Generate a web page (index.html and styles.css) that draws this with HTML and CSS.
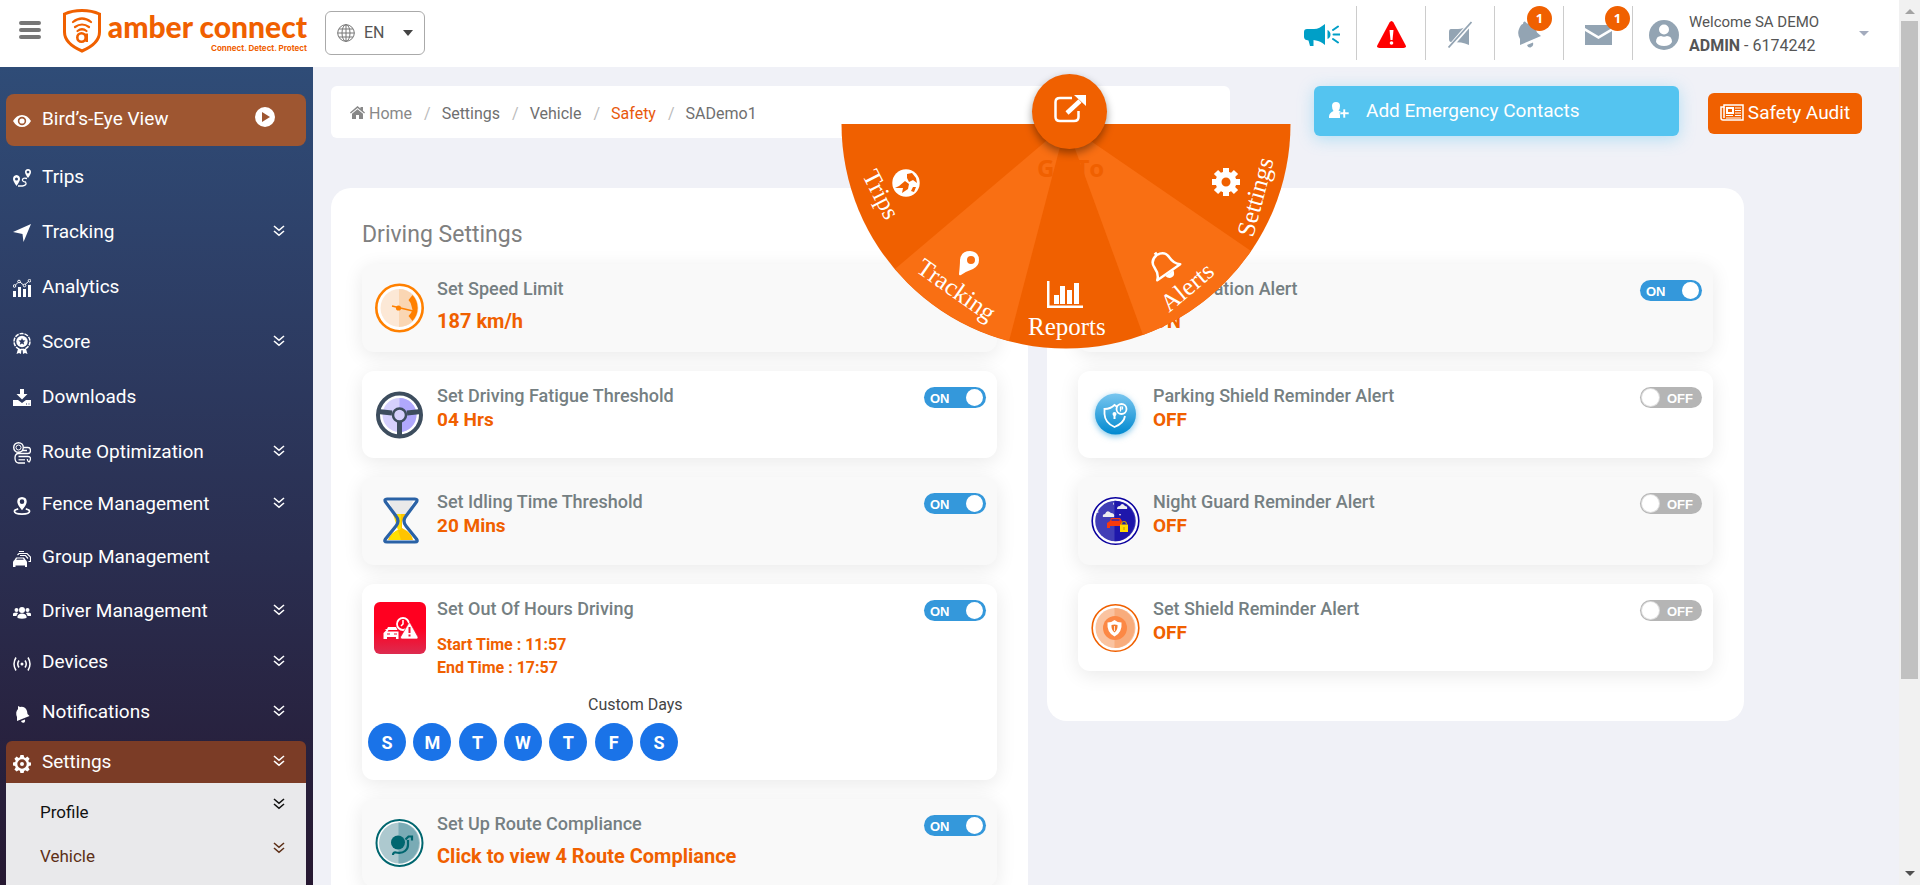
FILE: index.html
```html
<!DOCTYPE html>
<html lang="en">
<head>
<meta charset="utf-8">
<title>Amber Connect - Safety Settings</title>
<link rel="stylesheet" href="styles.css">
</head>
<body>
<svg class="defs" aria-hidden="true">
  <symbol id="chev" viewBox="0 0 12 12"><path d="M1 1l5 4.300 5-4.300M1 6l5 4.300L11 6" fill="none" stroke="currentColor" stroke-width="1.600"/></symbol>
  <symbol id="gear" viewBox="0 0 18 18"><path fill="currentColor" fill-rule="evenodd" d="M7.400 0h3.200l.5 2.300 1.300.6 2-1.300 2.200 2.200-1.300 2 .6 1.400 2.100.4v3l-2.200.5-.5 1.300 1.300 2-2.200 2.200-2-1.300-1.300.6-.5 2.100H7.400l-.5-2.200-1.300-.5-2 1.300-2.200-2.200 1.300-2-.6-1.300L0 10.600v-3l2.200-.5.5-1.300-1.300-2 2.200-2.200 2 1.300 1.300-.6zM9 4.300a4.700 4.700 0 100 9.400 4.700 4.700 0 000-9.400zM9 7a2 2 0 110 4 2 2 0 010-4z"/></symbol>
</svg>
<div class="app">
  <div class="page">
    <header class="topbar">
      <button class="menu-btn" aria-label="Menu"><svg viewBox="0 0 22 18" width="22" height="18"><path d="M2 2h18M2 9h18M2 16h18" stroke="#777" stroke-width="4" stroke-linecap="round"/></svg></button>
      <a class="logo" href="#">
        <svg viewBox="0 0 38 44" width="38" height="44" fill="none" stroke="#f06000">
          <path d="M19 1.500Q9 1.500 1.500 5v18c0 9 7 14.500 17.500 19 10.500-4.500 17.500-10 17.500-19V5Q29 1.500 19 1.500z" stroke-width="3"/>
          <path d="M10 13q9-7 18 0M12 18q7-5 14 0M14.500 22q4.500-3.500 9 0" stroke-width="2.200" stroke-linecap="round"/>
          <circle cx="18.500" cy="28.500" r="4.200" stroke-width="2.600"/><path d="M23.700 24.500v8.500" stroke-width="2.600"/>
        </svg>
        <span class="wordmark"><span class="brand">amber connect</span><span class="tagline">Connect. Detect. Protect</span></span>
      </a>
      <button class="lang" aria-label="Language">
        <svg viewBox="0 0 18 18" width="18" height="18" fill="none" stroke="#777"><circle cx="9" cy="9" r="8.300"/><ellipse cx="9" cy="9" rx="4" ry="8.300"/><path d="M9 .7v16.600M.7 9h16.600M2 5h14M2 13h14"/></svg>
        <span>EN</span>
        <svg viewBox="0 0 10 6" width="10" height="6"><path d="M0 0h10L5 6z" fill="#444"/></svg>
      </button>
      <div class="tools">
        <button class="tool" aria-label="Announcements"><svg viewBox="0 0 36 22" width="36" height="22"><path fill="#009fc7" d="M3 5h7c4 0 7-2 11-5v21c-4-3-6-4-9-4.500L9.500 16v6H6l-1.500-5.500Q0 16 0 13V8q0-3 3-3zM23.500 6q3 1.500 3 4.500t-3 4.500z"/><path d="M29 6l5-3.500M29.500 10.500h6M29 15l5 3.500" stroke="#009fc7" stroke-width="2" stroke-linecap="round"/></svg></button>
        <button class="tool" aria-label="Emergency"><svg viewBox="0 0 29 27" width="29" height="27"><path fill="red" d="M12.500 1.500q2-3 4 0L28.500 24q1.500 3-2 3h-24Q-1 27 .5 24z"/><path d="M12.500 9h4l-1 10h-2z" fill="#fff"/><circle cx="14.500" cy="22" r="1.800" fill="#fff"/></svg></button>
        <button class="tool" aria-label="Mute"><svg viewBox="0 0 24 27" width="24" height="27"><path fill="#93a4b3" d="M3 8h7q5 0 11-4v20q-4-2-8-2.500L3 21q-2 0-2-3v-7q0-3 2-3z"/><path d="M24.500 0L1 27" stroke="#fff" stroke-width="4.500"/><path d="M23.500 1L.5 26.500" stroke="#93a4b3" stroke-width="1.800"/></svg></button>
        <button class="tool" aria-label="Alerts"><svg viewBox="0 0 24 27" width="24" height="27" fill="#93a4b3"><path d="M2 8Q4 3 6 3q0-3 2-2.500l2 2q5-.5 8 4l2 5 4 3.500-21 9V18Q0 13 2 8zM10 24l6-2.500q1 4-2.500 5Q11 27 10 24z"/></svg><span class="badge">1</span></button>
        <button class="tool" aria-label="Messages"><svg viewBox="0 0 27 20" width="27" height="20" fill="#93a4b3"><path d="M0 0h27v3L13.500 11 0 3z"/><path d="M0 6l13.500 8L27 6v14H0z"/></svg><span class="badge">1</span></button>
      </div>
      <button class="account">
        <svg viewBox="0 0 30 30" width="30" height="30"><circle cx="15" cy="15" r="15" fill="#93a4b3"/><circle cx="15" cy="9.500" r="5" fill="#fff"/><path d="M7 22q0-6 5-6 3 1.500 6 0 5 0 5 6-2 4-8 4t-8-4z" fill="#fff"/></svg>
        <span class="who"><span class="hello">Welcome SA DEMO</span><br><b>ADMIN</b> - 6174242</span>
        <svg viewBox="0 0 10 5" width="10" height="5"><path d="M0 0h10L5 5z" fill="#a3abbd"/></svg>
      </button>
    </header>
    <div class="body">
      <nav class="sidebar">
        <a class="item birdseye" href="#"><svg viewBox="0 0 18 18"><path fill="currentColor" fill-rule="evenodd" d="M0 9q3.500-6 9-6t9 6q-3.500 6-9 6T0 9zm9-4.200a4.200 4.200 0 100 8.400 4.200 4.200 0 000-8.400z"/><circle cx="9" cy="9" r="2.600" fill="currentColor"/></svg><span>Bird’s-Eye View</span><svg class="play" viewBox="0 0 20 20"><circle cx="10" cy="10" r="10" fill="currentColor"/><path d="M7 5v10l8-5z" fill="#9e5631"/></svg></a>
        <a class="item" href="#"><svg viewBox="0 0 18 18"><path fill="currentColor" fill-rule="evenodd" d="M3.500 6Q0 6.500 0 10q0 2 3.500 7Q7 12 7 10 7 6.500 3.500 6zm0 2.500a1.500 1.500 0 110 3 1.500 1.500 0 010-3zM15 0q-3 .3-3 3 0 2 3 6 3-4 3-6 0-2.700-3-3zm0 1.700a1.400 1.400 0 110 2.800 1.400 1.400 0 010-2.800z"/><path d="M14 9.500q-4-1-4.500 1t3 2.500q2 3-3 4H5" fill="none" stroke="currentColor" stroke-width="1.300"/></svg><span>Trips</span></a>
        <a class="item" href="#"><svg viewBox="0 0 18 18"><path fill="currentColor" d="M18 0L10.500 18 9.500 10 0 8z"/></svg><span>Tracking</span><svg class="chev"><use href="#chev"/></svg></a>
        <a class="item" href="#"><svg viewBox="0 0 18 18"><path fill="currentColor" d="M0 12h3v6H0zM5 8h3v10H5zM10 10h3v8h-3zM15 6h3v12h-3z"/><g fill="none" stroke="currentColor"><path d="M2.500 6L5 3.500M7 3l3.500 3M12 5.500L15.500 2.500"/><circle cx="1.500" cy="7" r="1.300"/><circle cx="6" cy="2.500" r="1.300"/><circle cx="11.500" cy="6.500" r="1.300"/><circle cx="16.500" cy="1.700" r="1.300"/></g></svg><span>Analytics</span></a>
        <a class="item" href="#"><svg class="tall" viewBox="0 0 18 22"><circle cx="9" cy="9.500" r="8" fill="none" stroke="currentColor" stroke-width="1.500" stroke-dasharray="4 1"/><circle cx="9" cy="9.500" r="5.700" fill="currentColor"/><path d="M9 6l1 2.300 2.500.2-1.900 1.700.6 2.500L9 11.400l-2.200 1.300.6-2.500-1.900-1.700L8 8.300z" fill="#2d3a63"/><path d="M5 17l-1.500 5L6 21l2 1 .5-5zM13 17l1.500 5-2.500-1-2 1-.5-5z" fill="currentColor"/></svg><span>Score</span><svg class="chev"><use href="#chev"/></svg></a>
        <a class="item" href="#"><svg viewBox="0 0 18 18"><path fill="currentColor" d="M7 0h4v5h3.500L9 10.500 3.500 5H7zM0 11h5l4 3 4-3h5v6H0z"/><path d="M13 15h1M15.500 15h1" stroke="#2d3a63"/></svg><span>Downloads</span></a>
        <a class="item" href="#"><svg class="tall" viewBox="0 0 18 22"><g fill="none" stroke="currentColor"><circle cx="5.500" cy="5.500" r="4.800" stroke-width="1.400"/><circle cx="5.500" cy="5.500" r="2.500"/><path d="M11 5.500h4q2.500 0 2.500 3t-2.500 3H5.500Q2 11.500 2 16t3.500 5H12M9 8.500h5M5.500 14.500H15q2.500 0 2.500 2T16 20q-2-1-1.500-3" stroke-width="1.300"/><path d="M5.500 17.800H12" stroke-width="1.200"/></g></svg><span>Route Optimization</span><svg class="chev"><use href="#chev"/></svg></a>
        <a class="item short" href="#"><svg viewBox="0 0 18 19"><path fill="currentColor" fill-rule="evenodd" d="M9 0q5 .3 5 5Q14 8 9 14 4 8 4 5 4 .3 9 0zm0 2.500a2.400 2.400 0 100 4.800 2.400 2.400 0 000-4.800z"/><path d="M5 12.500Q1 13.500 1 15q0 3 8 3t8-3q0-1.500-4-2.500" fill="none" stroke="currentColor" stroke-width="1.800"/></svg><span>Fence Management</span><svg class="chev"><use href="#chev"/></svg></a>
        <a class="item tallrow" href="#"><svg viewBox="0 0 18 18"><path fill="currentColor" fill-rule="evenodd" d="M0 12.500q0-2 1.500-2.500L3 7.500h8l1.700 2.500q1.300.5 1.300 2.500V17h-2v-1.500H2.500V17H0zm3.200-2.700h7.600L10 8.600H4z"/><path d="M4.500 5L6 3.500h8L17.500 7v4.500h-2M7 5.500h5.500l2.500 3M6 1.500h5" fill="none" stroke="currentColor" stroke-width="1.200"/></svg><span>Group Management</span></a>
        <a class="item mid" href="#"><svg viewBox="0 0 18 18" fill="currentColor"><circle cx="3.500" cy="6" r="2"/><circle cx="14.500" cy="6" r="2"/><circle cx="9" cy="6" r="3"/><path d="M4.500 14v-2q1-2.500 4.500-2.500t4.500 2.500v2q-4.500 1.500-9 0zM0 12V9.500q1-1 4-1l1 1Q3.500 10.500 3.500 12zM18 12V9.500q-1-1-4-1l-1 1q1.500 1 1.500 2.500z"/></svg><span>Driver Management</span><svg class="chev"><use href="#chev"/></svg></a>
        <a class="item short" href="#"><svg viewBox="0 0 18 18"><circle cx="9" cy="9" r="1.500" fill="currentColor"/><path d="M6 5.500q-2.500 3.500 0 7M12 5.500q2.500 3.500 0 7M3 2.500q-4 6.500 0 13M15 2.500q4 6.500 0 13" fill="none" stroke="currentColor" stroke-width="1.500"/></svg><span>Devices</span><svg class="chev"><use href="#chev"/></svg></a>
        <a class="item short" href="#"><svg viewBox="0 0 18 18"><path fill="currentColor" d="M5 1l2 1q5-1 7 4l.5 3 2 2L4 16v-4Q2 7 5 4zM8 16l4-1.500q.5 3-1.500 3.200Q8.500 18 8 16z"/></svg><span>Notifications</span><svg class="chev"><use href="#chev"/></svg></a>
        <a class="item active" href="#"><svg><use href="#gear"/></svg><span>Settings</span><svg class="chev"><use href="#chev"/></svg></a>
        <div class="submenu">
          <a class="sub" href="#"><span>Profile</span><svg class="chev"><use href="#chev"/></svg></a>
          <a class="sub current" href="#"><span>Vehicle</span><svg class="chev"><use href="#chev"/></svg></a>
        </div>
      </nav>
      <main class="main">
        <div class="toprow">
          <ol class="crumbs">
            <li><a class="home" href="#"><svg viewBox="0 0 15 13" width="15" height="13" fill="#888"><path d="M7.500 0l3 2.600V1H13v3.700L15 6.500l-.8 1L7.500 2 .8 7.500 0 6.500z"/><path d="M7.500 3.200L13 7.700V13H9V9H6v4H2V7.700z"/></svg> Home</a></li>
            <li><a href="#">Settings</a></li><li><a href="#">Vehicle</a></li><li><a class="here" href="#">Safety</a></li><li>SADemo1</li>
          </ol>
          <button class="contacts"><svg viewBox="0 0 20 17" width="20" height="17" fill="#fff"><path d="M3 4q0-4 4-4t4 4q0 3-1.500 4.500l3 1.500v2.500H11V16H0q-.5-5 4.500-7Q3 7 3 4z"/><path d="M14 7h2.500v3H20v2.500h-3.500V16H14v-3.500h-3V10h3z" stroke="#54c4f0" stroke-width=".6"/></svg>Add Emergency Contacts</button>
          <button class="audit"><svg viewBox="0 0 24 17" width="24" height="17" fill="none" stroke="#fff"><path d="M4 1h19v15H3q-2 0-2-2V3h3z" stroke-width="1.500"/><path d="M4 3v11" stroke-width="1.500"/><path d="M7 4h6v5H7z" stroke-width="2"/><path d="M15 4h6M15 6.500h6M15 9h6M6 11.500h7M15 11.500h6M6 14h15" stroke-width="1.200"/></svg>Safety Audit</button>
        </div>
        <div class="panels">
          <section class="panel">
            <h2>Driving Settings</h2>
            <article class="card spaced">
              <svg class="ico" viewBox="0 0 50 50"><circle cx="24.500" cy="25" r="23.200" fill="#fff" stroke="#ff8000" stroke-width="2.600"/><circle cx="24.500" cy="25" r="19" fill="#fce8d6"/><path d="M24 6a19 19 0 010 38z" fill="#fad6b3"/><path d="M37.500 12a19 19 0 010 26l-4-5q3-3 4-6l-1-4q-1-4-3-6z" fill="#ff8000"/><circle cx="23.500" cy="25" r="2.600" fill="#ff8000"/><path d="M17 23l21 5" stroke="#ff8000" stroke-width="1.500"/></svg>
              <div class="info"><h3>Set Speed Limit</h3><p class="value">187 km/h</p></div>
            </article>
            <article class="card">
              <svg class="ico" viewBox="0 0 50 50"><circle cx="24.500" cy="25" r="21.500" fill="#fff" stroke="#3d4d5e" stroke-width="4"/><circle cx="24.500" cy="25" r="17" fill="#d5d0fd"/><path d="M24.500 8a17 17 0 010 34z" fill="#b0a8fc"/><path d="M3 21.500l14 1.500M32 23l14-1.500M24.500 32v13" stroke="#3d4d5e" stroke-width="5"/><circle cx="24.500" cy="25" r="6.500" fill="#d5d0fd" stroke="#3d4d5e" stroke-width="2.500"/></svg>
              <div class="info"><h3>Set Driving Fatigue Threshold</h3><p class="value">04 Hrs</p></div>
              <label class="toggle"><input type="checkbox" checked aria-label="Driving fatigue threshold"><span>ON</span></label>
            </article>
            <article class="card">
              <svg class="ico" viewBox="0 0 50 50"><path d="M11 4h30L28 22v6l13 17H11l13-17v-6z" fill="#fff"/><path d="M14 5h24l-5 13H19z" fill="#e9e9e9"/><path d="M18 18h16l-7 7v7q10 5 11 12H13q2-7 12-11v-8z" fill="#ffc400"/><path d="M18 18h8v15q-9 2-12 11h12" fill="#ffe000"/><path d="M12 3h28q3 0 1.500 3L31 20q-4 5 0 10l10.500 13q2 3-1.500 3H12q-3.500 0-1.500-3L21 30q4-5 0-10L10.500 6Q9 3 12 3z" fill="none" stroke="#2a62a6" stroke-width="3.200"/></svg>
              <div class="info"><h3>Set Idling Time Threshold</h3><p class="value">20 Mins</p></div>
              <label class="toggle"><input type="checkbox" checked aria-label="Idling time threshold"><span>ON</span></label>
            </article>
            <article class="card hours">
              <svg class="ico" viewBox="0 0 50 50"><defs><linearGradient id="red" x2="0" y2="1"><stop offset=".5" stop-color="#ff0020"/><stop offset="1" stop-color="#dc2c50"/></linearGradient></defs><rect x="-1" y="-1" width="52" height="52" rx="6" fill="url(#red)"/><circle cx="28" cy="21" r="6" fill="none" stroke="#fff" stroke-width="1.800"/><path d="M28 17v4l-2 2" stroke="#fff" fill="none" stroke-width="1.500"/><path d="M33.500 20.500q1-1.500 2 0L43 34q.5 2-1.500 2H27q-2 0-1.500-2z" fill="#fff" stroke="#f01030" stroke-width=".7"/><path d="M34.500 24v6M34.500 31.500v2" stroke="#f01030" stroke-width="2"/><path d="M8.500 30l3-3-2-1h2.500l1-2h8l1.500 3h-9l-1 1.500h11V36h-2.500v-2h-9v2H8.500z" fill="#fff"/><path d="M12 31h3M19 31h3" stroke="#f01030"/></svg>
              <div class="info"><h3>Set Out Of Hours Driving</h3><p class="times">Start Time : 11:57<br>End Time : 17:57</p></div>
              <label class="toggle"><input type="checkbox" checked aria-label="Out of hours driving"><span>ON</span></label>
              <div class="schedule"><p>Custom Days</p>
                <div class="days"><button>S</button><button>M</button><button>T</button><button>W</button><button>T</button><button>F</button><button>S</button></div></div>
            </article>
            <article class="card spaced">
              <svg class="ico" viewBox="0 0 50 50"><circle cx="24.500" cy="25" r="23" fill="#fff" stroke="#00666f" stroke-width="2"/><circle cx="24.500" cy="25" r="20.500" fill="#adc9cf"/><path d="M23.500 4.500a20.500 20.500 0 010 41z" fill="#7aabb5"/><circle cx="23" cy="24.500" r="7" fill="#00666f"/><path d="M18 37q0-3 3-2.500 6 1 9-1.500t3-6V22M30.500 21.500l3-3H37v4" fill="none" stroke="#00666f" stroke-width="2.200"/></svg>
              <div class="info"><h3>Set Up Route Compliance</h3><p class="value">Click to view 4 Route Compliance</p></div>
              <label class="toggle"><input type="checkbox" checked aria-label="Route compliance"><span>ON</span></label>
            </article>
          </section>
          <section class="panel plain">
            <article class="card spaced">
              <svg class="ico" viewBox="0 0 50 50"><circle cx="24.500" cy="25" r="23" fill="#fff" stroke="#ff8000" stroke-width="2"/></svg>
              <div class="info"><h3>Acceleration Alert</h3><p class="value">ON</p></div>
              <label class="toggle"><input type="checkbox" checked aria-label="Acceleration alert"><span>ON</span></label>
            </article>
            <article class="card">
              <svg class="ico" viewBox="0 0 50 50"><defs><linearGradient id="blue" x2="0" y2="1"><stop stop-color="#79c6ef"/><stop offset="1" stop-color="#0089d0"/></linearGradient></defs><circle class="glow" cx="24.500" cy="24" r="20.500" fill="url(#blue)"/><g fill="none" stroke="#fff" stroke-width="1.800"><path d="M34 26q-1 7-10.500 11Q14 33 13.500 24v-5q6 0 10-4l3 2"/><circle cx="30.500" cy="19" r="5"/><path d="M29.500 21.500v-4.500h2v2h-2" stroke-width="1.200"/><path d="M23.500 24v5" stroke-width="2"/></g><circle cx="23.500" cy="24" r="2" fill="#fff"/></svg>
              <div class="info"><h3>Parking Shield Reminder Alert</h3><p class="value">OFF</p></div>
              <label class="toggle"><input type="checkbox" aria-label="Parking shield reminder"><span>OFF</span></label>
            </article>
            <article class="card">
              <svg class="ico" viewBox="0 0 50 50"><circle cx="24.500" cy="25" r="23.300" fill="#fff" stroke="#0a009e" stroke-width="1.600"/><circle cx="24.500" cy="25" r="20.300" fill="#413eb6"/><path d="M23.500 4.700a20.300 20.300 0 010 40.600z" fill="#1e17ab"/><path d="M12 21q-1-3 2-3 2-5 6-1 4 0 3 4zM26 13q0-3 3-3 2-4 5 0 3 0 2 3zM22 6l1 2-1 1zM38 11l1 2zM28 18h2l-1 2zM6 15l2 1-2 1z" fill="#eee"/><path d="M16 27l3-2 1-3h9l2 3v5H19v2h-3z" fill="#f83a0c"/><path d="M20.500 24h8" stroke="#2f28b0" stroke-width="1.500"/><path d="M29 28.500h8v7.500h-8z" fill="#ffdb00"/><path d="M30.500 28.500q0-3 2.500-3t2.500 3M33 31v3" stroke="#c8a000" fill="none" stroke-width="1.200"/></svg>
              <div class="info"><h3>Night Guard Reminder Alert</h3><p class="value">OFF</p></div>
              <label class="toggle"><input type="checkbox" aria-label="Night guard reminder"><span>OFF</span></label>
            </article>
            <article class="card">
              <svg class="ico" viewBox="0 0 50 50"><circle cx="24.500" cy="25" r="23.300" fill="#fff" stroke="#f06000" stroke-width="1.600"/><circle cx="24.500" cy="25" r="20" fill="#fac3a0"/><path d="M23.500 5a20 20 0 010 40z" fill="#f8ac7c"/><circle cx="24" cy="25" r="12" fill="#fc8845"/><path d="M23.500 17q3 2.500 7 2.500 1 10-7 14-8-4-7-14 4 0 7-2.500z" fill="#fff"/><path d="M20.500 22q3-1 6 0 .5 5-3 7.500-3.500-2.500-3-7.500z" fill="#f37a2c"/><path d="M23.500 23v5" stroke="#fff" stroke-width=".8"/></svg>
              <div class="info"><h3>Set Shield Reminder Alert</h3><p class="value">OFF</p></div>
              <label class="toggle"><input type="checkbox" aria-label="Shield reminder"><span>OFF</span></label>
            </article>
          </section>
        </div>
        <nav class="wheel" aria-label="Go to">
          <svg viewBox="-225 -54 450 280" width="450" height="280">
            <path class="dark" d="M-224.500 0H224.500A224.500 224.500 0 01-224.500 0z"/>
            <g class="light"><path d="M0 0L185 127A224.500 224.500 0 0177 211z"/><path d="M0 0L-57 217A224.500 224.500 0 01-171 145z"/></g>
            <text class="goto" x="-29" y="53">Go To</text>
            <a href="#"><circle cx="-160" cy="59" r="13.700" fill="#fff"/><path class="dark" d="M-159 50l5-1 4 5 1 5-4-3-4 2-2-4zM-171 64l4-2 6-5 4 3-1 5-6 4 1-5zM-153 63l3 0-2 5-3-1z"/><text transform="translate(-204 51) rotate(63)">Trips</text></a>
            <a href="#"><path fill="#fff" fill-rule="evenodd" d="M-107 150q1-9 1-14 1-9 10-9 9 1 9 9 0 6-6 9-6 2-12 6-2 1-2-1zM-95 132a4 4 0 100 8 4 4 0 000-8z"/><text transform="translate(-151 147) rotate(35)">Tracking</text></a>
            <a href="#"><path fill="#fff" d="M-19 157h2.500v24.500H17v2.500h-36zM-12 171h5v9h-5zM-6 162h5v18h-5zM1 166h5v14H1zM8 159h5v21H8z"/><text x="-38" y="211">Reports</text></a>
            <a href="#"><g transform="translate(97 140) rotate(-35)"><path d="M-14 10q5-4 5-12 0-8 9-9 9 1 9 9 0 8 5 12z" fill="none" stroke="#fff" stroke-width="2.500" stroke-linejoin="round"/><path d="M-5 11h10q-1 5-5 5t-5-5z" fill="#fff"/><path d="M0-14v3" stroke="#fff" stroke-width="3"/></g><text transform="translate(103 189) rotate(-40)">Alerts</text></a>
            <a href="#"><g transform="translate(160 58)"><circle r="7.500" fill="none" stroke="#fff" stroke-width="6"/><path d="M0-14V-8M0 14V8M-14 0H-8M14 0H8M-10-10l4 4M10 10L6 6M10-10L6-6M-10 10l4-4" stroke="#fff" stroke-width="6"/></g><text transform="translate(187 114) rotate(-75)">Settings</text></a>
          </svg>
          <button class="hub" aria-label="Open"><svg viewBox="0 0 32 28" width="32" height="28"><path d="M18 3H6Q1.500 3 1.500 7v15q0 4 4.500 4h14q4.500 0 4.500-4v-6" fill="none" stroke="#fff" stroke-width="2.500"/><path d="M13 18L26 6" stroke="#fff" stroke-width="4.500"/><path d="M20 0h12v11z" fill="#fff"/></svg></button>
        </nav>
      </main>
    </div>
  </div>
  <div class="scrollbar" aria-hidden="true">
    <svg viewBox="0 0 10 5" width="10" height="5"><path d="M0 5h10L5 0z" fill="#a3a3a3"/></svg>
    <div class="track"><div class="thumb"></div></div>
    <svg viewBox="0 0 10 5" width="10" height="5"><path d="M0 0h10L5 5z" fill="#505050"/></svg>
  </div>
</div>
</body>
</html>
```
FILE: styles.css
```css
* { box-sizing: border-box; }
body { margin: 0; font-family: Roboto, "Liberation Sans", sans-serif; font-size: 16px; color: #777; background: #f0f1f7; }
button { font: inherit; color: inherit; border: 0; padding: 0; background: none; cursor: pointer; }
a { color: inherit; text-decoration: none; }
h2, h3, p, ol { margin: 0; padding: 0; font-weight: 400; }
svg { flex: none; display: block; }
.defs { position: absolute; width: 0; height: 0; }
.app { display: flex; height: 100vh; overflow: hidden; }
.page { flex: 1; min-width: 0; display: flex; flex-direction: column; }
.body { flex: 1; min-height: 0; display: flex; }

/* top bar */
.topbar { display: flex; align-items: center; height: 67px; flex: none; background: #fff; padding-left: 19px; }
.menu-btn { margin-bottom: 7px; }
.logo { display: flex; gap: 8px; margin: 0 18px 6px 22px; color: #f06000; }
.wordmark { display: flex; flex-direction: column; align-items: flex-end; width: 198px; }
.brand { font: 900 30px/35px Lato, sans-serif; white-space: nowrap; }
.tagline { font: 700 8px/8px Inter, sans-serif; white-space: nowrap; }
.lang { display: flex; align-items: center; width: 100px; height: 44px; margin-bottom: 2px; padding: 0 11px; border: 1px solid #aaa; border-radius: 6px; color: #555; }
.lang span { flex: 1; text-align: left; padding-left: 9px; }
.tools { display: flex; margin-left: auto; padding-bottom: 2px; }
.tool { position: relative; display: flex; align-items: center; justify-content: center; width: 69px; height: 54px; padding-top: 4px; border-right: 1px solid #ccc; }
.badge { position: absolute; left: 32px; top: 0; width: 25px; height: 25px; border-radius: 50%; background: #f06000; color: #fff; font: 700 13px/25px "Open Sans", sans-serif; text-align: center; }
.tool:last-child .badge { left: 41px; }
.account { display: flex; align-items: center; gap: 10px; width: 266px; padding: 0 30px 0 16px; color: #555; text-align: left; line-height: 23px; }
.account svg:first-child { margin-top: 2px; }
.who { flex: 1; }
.hello { font-size: 15px; }

/* sidebar */
.sidebar { width: 313px; flex: none; padding: 27px 7px 0 6px; background: linear-gradient(#2f4c77, #2e426b 20%, #2a2e50 60%, #261831); color: #fff; font-size: 19px; }
.item { display: flex; align-items: center; height: 55px; padding: 0 21px 0 7px; }
.item > svg { width: 18px; height: 18px; margin: 3px 11px 0 0; }
.item > svg.tall { height: 22px; }
.item span { flex: 1; padding-bottom: 1px; }
.item > svg.chev, .sub .chev { width: 12px; height: 12px; margin: 0 0 2px; }
.item > svg.play { width: 20px; height: 20px; margin: 0 10px 4px 0; }
.item.short { height: 50px; }
.item.mid { height: 52px; }
.item.tallrow { height: 56px; }
.item.birdseye { height: 52px; margin-bottom: 3px; padding-bottom: 2px; border-radius: 8px; background: #9e5631; }
.item.active { height: 42px; margin-top: 4px; border-radius: 6px 6px 0 0; background: #7b3c26; }
.submenu { height: 200px; padding-top: 8px; background: #e9e9eb; color: #111; }
.sub { display: flex; height: 44px; padding: 0 21px 0 34px; line-height: 43px; font-size: 17px; }
.sub span { flex: 1; }
.sub .chev { margin-top: 7px; }
.current { color: #5d2f17; }

/* content */
.main { position: relative; flex: 1; min-width: 0; padding: 19px 0 0 18px; }
.toprow { display: flex; align-items: flex-start; padding-right: 37px; margin-bottom: 50px; }
.crumbs { flex: 1; display: flex; align-items: center; height: 52px; padding: 2px 0 0 19px; margin-right: 84px; background: #fff; border-radius: 6px; list-style: none; color: #6f6f6f; }
.crumbs li + li::before { content: "/"; color: #bbb; padding: 0 11px 0 12px; }
.crumbs svg { display: inline-block; }
.crumbs .home { color: #888; }
.crumbs .here { color: #e8590c; }
.contacts { display: flex; align-items: center; gap: 17px; width: 365px; height: 50px; padding: 0 0 2px 15px; border-radius: 6px; background: #54c4f0; color: #fff; font-size: 19px; box-shadow: 0 3px 16px rgba(84, 196, 240, .4); }
.audit { display: flex; align-items: center; justify-content: center; gap: 4px; width: 154px; height: 41px; margin: 7px 0 0 29px; padding-bottom: 2px; border-radius: 6px; background: #f06000; color: #fff; font-size: 19px; }
.panels { display: grid; grid-template-columns: 1fr 1fr; gap: 19px; align-items: start; padding-right: 155px; }
.panel { display: grid; gap: 19px; padding: 31px 31px 50px; background: #fff; border-radius: 20px; }
.panel h2 { font-size: 23px; line-height: 32px; margin-bottom: -6px; color: #808080; }
.panel.plain { padding-top: 76px; }
.card { display: grid; grid-template-columns: 50px 1fr 62px; column-gap: 12px; align-content: start; min-height: 87px; padding: 16px 11px 0 13px; background: #fff; border-radius: 12px; box-shadow: 0 4px 20px rgba(0, 0, 0, .09); }
.panel .card:nth-of-type(odd) { min-height: 88px; background: #f9f9f9; }
.ico { width: 50px; height: 50px; margin-top: 3px; overflow: visible; }
.glow { filter: drop-shadow(0 2px 3px rgba(0, 137, 208, .5)); }
.info h3 { font-size: 18px; line-height: 18px; font-weight: 500; color: #757f82; }
.value { font-size: 19px; line-height: 29px; font-weight: 700; color: #f06000; }
.spaced .value { margin-top: 9px; font-size: 20px; }
.times { margin-top: 15px; font-weight: 700; line-height: 23px; color: #f06000; }
.hours { padding-bottom: 19px; }
.schedule { grid-column: 1 / -1; margin: 16px 0 0 -7px; color: #444; font-weight: 500; }
.schedule p { line-height: 20px; padding-left: 220px; }
.days { display: flex; justify-content: space-between; width: 310px; margin-top: 8px; }
.days button { width: 38px; height: 38px; border-radius: 50%; background: #1a73e8; color: #fff; font-size: 18px; font-weight: 700; }
.toggle { position: relative; height: 21px; font: 700 13px/23px "Liberation Sans", sans-serif; color: #fff; }
.toggle input { appearance: none; display: block; width: 62px; height: 21px; margin: 0; padding: 2px; border-radius: 11px; background: #b5b5b5; }
.toggle input::before { content: ""; display: block; width: 17px; height: 17px; border-radius: 50%; background: #fff; box-shadow: 0 0 0 1px #ddd; }
.toggle input:checked { background: #3498db; padding-left: 42px; }
.toggle input:checked::before { box-shadow: none; }
.toggle span { position: absolute; top: 0; left: 27px; }
.toggle input:checked + span { left: 6px; }

/* quick navigation wheel */
.wheel { position: absolute; left: 528px; top: 3px; }
.wheel .dark { fill: #f06000; }
.wheel .light { fill: #f96f13; }
.wheel text { font-family: "Liberation Serif", serif; font-size: 25px; fill: #fff; }
.wheel text.goto { font: 700 24px "Open Sans", sans-serif; fill: #f06000; }
.hub { position: absolute; left: 191px; top: 4px; display: flex; align-items: center; justify-content: center; width: 75px; height: 75px; padding-bottom: 5px; border-radius: 50%; background: #f06000; box-shadow: 0 4px 8px rgba(0, 0, 0, .4); }

/* scroll indicator */
.scrollbar { display: flex; flex-direction: column; align-items: center; width: 21px; padding: 9px 0; background: #f1f1f1; }
.track { flex: 1; width: 17px; margin: 7px 0; }
.thumb { height: 78%; background: #c1c1c1; }
```
